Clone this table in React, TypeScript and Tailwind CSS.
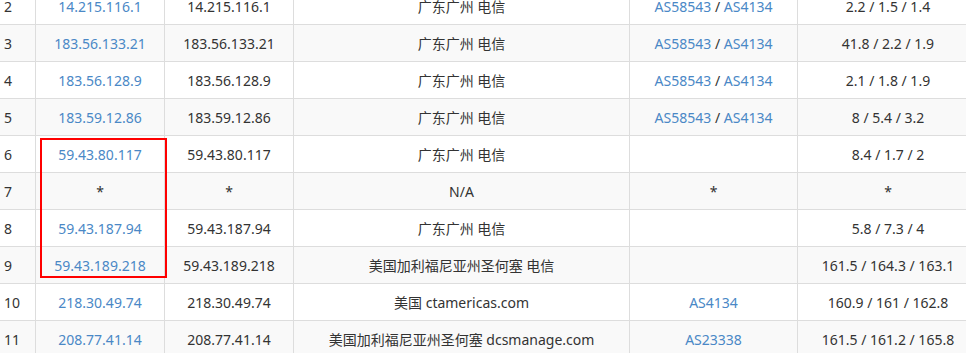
const hops = [
  { n: 2, ip: '14.215.116.1', host: '14.215.116.1', loc: '广东广州 电信', as: ['AS58543', 'AS4134'], lat: '2.2 / 1.5 / 1.4' },
  { n: 3, ip: '183.56.133.21', host: '183.56.133.21', loc: '广东广州 电信', as: ['AS58543', 'AS4134'], lat: '41.8 / 2.2 / 1.9' },
  { n: 4, ip: '183.56.128.9', host: '183.56.128.9', loc: '广东广州 电信', as: ['AS58543', 'AS4134'], lat: '2.1 / 1.8 / 1.9' },
  { n: 5, ip: '183.59.12.86', host: '183.59.12.86', loc: '广东广州 电信', as: ['AS58543', 'AS4134'], lat: '8 / 5.4 / 3.2' },
  { n: 6, ip: '59.43.80.117', host: '59.43.80.117', loc: '广东广州 电信', as: [], lat: '8.4 / 1.7 / 2' },
  { n: 7, ip: '*', host: '*', loc: 'N/A', as: null, lat: '*' },
  { n: 8, ip: '59.43.187.94', host: '59.43.187.94', loc: '广东广州 电信', as: [], lat: '5.8 / 7.3 / 4' },
  { n: 9, ip: '59.43.189.218', host: '59.43.189.218', loc: '美国加利福尼亚州圣何塞 电信', as: [], lat: '161.5 / 164.3 / 163.1' },
  { n: 10, ip: '218.30.49.74', host: '218.30.49.74', loc: '美国 ctamericas.com', as: ['AS4134'], lat: '160.9 / 161 / 162.8' },
  { n: 11, ip: '208.77.41.14', host: '208.77.41.14', loc: '美国加利福尼亚州圣何塞 dcsmanage.com', as: ['AS23338'], lat: '161.5 / 161.2 / 165.8' },
]

export default function App() {
  return (
    <div
      className="relative w-[966px] h-[353px] overflow-hidden bg-white text-[14px] text-[#333]"
      style={{ fontFamily: '"Noto Sans", "Noto Sans CJK SC", sans-serif' }}
    >
      <div className="-mt-[12px] w-[1010px]">
        {hops.map((h, i) => (
          <div
            key={h.n}
            className={`grid grid-cols-[35px_129px_129px_336px_168px_181px] h-[37px] border-b border-[#ddd] ${
              i % 2 === 1 ? 'bg-[#f9f9f9]' : 'bg-white'
            }`}
          >
            <div className="flex items-center pl-[4px]">{h.n}</div>
            <div className={`flex items-center justify-center border-l border-[#ddd] ${h.ip === '*' ? '' : 'text-[#4a88c6]'}`}>
              {h.ip}
            </div>
            <div className="flex items-center justify-center border-l border-[#ddd]">{h.host}</div>
            <div className="flex items-center justify-center border-l border-[#ddd]">{h.loc}</div>
            <div className="flex items-center justify-center border-l border-[#ddd]">
              {h.as === null ? (
                '*'
              ) : (
                <span className="whitespace-pre">
                  {h.as.map((a, k) => (
                    <span key={a}>
                      {k > 0 ? ' / ' : ''}
                      <span className="text-[#4a88c6]">{a}</span>
                    </span>
                  ))}
                </span>
              )}
            </div>
            <div className="flex items-center justify-center border-l border-[#ddd]">{h.lat}</div>
          </div>
        ))}
      </div>

      {/* highlight box */}
      <div className="absolute left-[40px] top-[138px] w-[127px] h-[140px] border-2 border-[#f00]"></div>
    </div>
  )
}
